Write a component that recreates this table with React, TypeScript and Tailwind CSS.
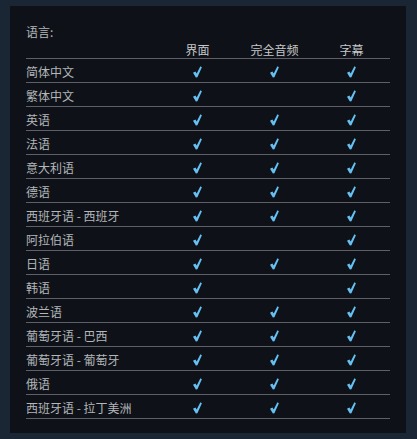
import React from "react";

const rows: [string, boolean, boolean, boolean][] = [
  ["简体中文", true, true, true],
  ["繁体中文", true, false, true],
  ["英语", true, true, true],
  ["法语", true, true, true],
  ["意大利语", true, true, true],
  ["德语", true, true, true],
  ["西班牙语 - 西班牙", true, true, true],
  ["阿拉伯语", true, false, true],
  ["日语", true, true, true],
  ["韩语", true, false, true],
  ["波兰语", true, true, true],
  ["葡萄牙语 - 巴西", true, true, true],
  ["葡萄牙语 - 葡萄牙", true, true, true],
  ["俄语", true, true, true],
  ["西班牙语 - 拉丁美洲", true, true, true],
];

function Check() {
  return (
    <svg width="9" height="12" viewBox="0 0 9 12" className="block">
      <path
        d="M0 6.8 L2.4 5.4 L3.7 7.4 L7.4 0.3 L8.9 1.3 L4.4 11.3 L2.9 11.6 Z"
        fill="#66c0f4"
      />
    </svg>
  );
}

export default function App() {
  return (
    <div
      className="w-[417px] h-[439px] bg-[#1b2635] pt-[6px] pl-[10px]"
      style={{ fontFamily: '"Noto Sans CJK SC", "Noto Sans", sans-serif' }}
    >
      <div className="w-[396px] h-[427px] bg-[#0e1218] px-[16px] pt-[17px] text-[12px] text-[#b4b6b8]">
        <div className="h-[18px] leading-[18px]">语言:</div>
        <div className="grid grid-cols-[133px_77px_77px_77px] h-[18px] border-b border-[#5d6167] text-[#c6c8ca] leading-[17px]">
          <div></div>
          <div className="text-center">界面</div>
          <div className="text-center">完全音频</div>
          <div className="text-center">字幕</div>
        </div>
        {rows.map(([name, a, b, c]) => (
          <div
            key={name}
            className="grid grid-cols-[133px_77px_77px_77px] h-[24px] border-b border-[#5d6167] items-center"
          >
            <div className="leading-[23px] pt-[1px]">{name}</div>
            {[a, b, c].map((v, i) => (
              <div key={i} className="flex justify-center pt-[1px] pr-[1px]">
                {v ? <Check /> : null}
              </div>
            ))}
          </div>
        ))}
      </div>
    </div>
  );
}
